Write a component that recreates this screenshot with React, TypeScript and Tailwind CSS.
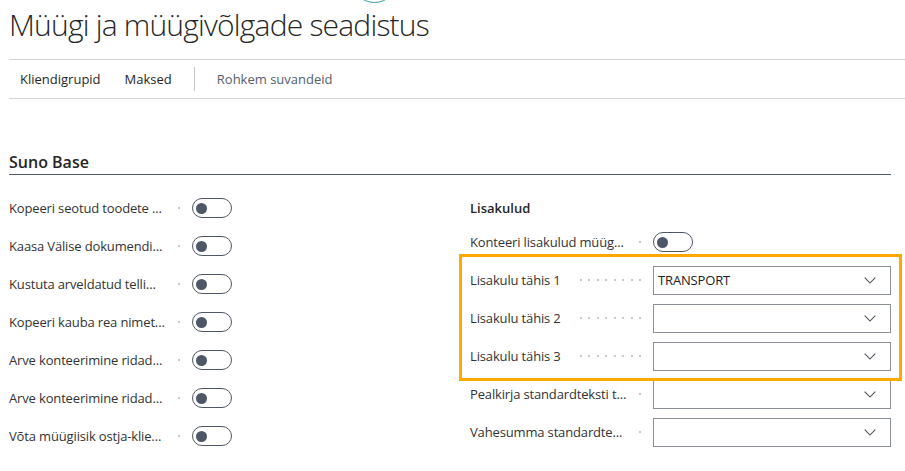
import React from "react";

const FONT = { fontFamily: "'Open Sans', 'Noto Sans', 'Liberation Sans', sans-serif" };

function Dots({ count }: { count: number }) {
  return (
    <div className="flex min-w-0 flex-1 items-center justify-end gap-[6.5px] overflow-hidden pl-[8px] pr-[12px]">
      {Array.from({ length: count }).map((_, i) => (
        <span key={i} className="h-[2px] w-[2px] shrink-0 bg-[#c9c9c9]" />
      ))}
    </div>
  );
}

function Label({ text, dots = 1 }: { text: string; dots?: number }) {
  return (
    <div className="flex w-[183px] shrink-0 items-center">
      <span className="shrink-0 whitespace-nowrap text-[13px] leading-[20px] tracking-[-0.15px] text-[#333333]">
        {text}
      </span>
      <Dots count={dots} />
    </div>
  );
}

function Toggle() {
  return (
    <div className="flex h-[20px] w-[40px] items-center rounded-full border border-[#4e5665] pl-[3px]">
      <span className="h-[11px] w-[11px] rounded-full bg-[#4e5768]" />
    </div>
  );
}

function ToggleRow({ label }: { label: string }) {
  return (
    <div className="flex h-[38px] items-center">
      <Label text={label} />
      <Toggle />
    </div>
  );
}

function Chevron() {
  return (
    <svg width="12" height="7" viewBox="0 0 12 7" fill="none">
      <polyline points="0.7,0.7 6,6 11.3,0.7" stroke="#4a4f57" strokeWidth="1.05" />
    </svg>
  );
}

function SelectRow({ label, value, dots = 1 }: { label: string; value?: string; dots?: number }) {
  return (
    <div className="flex h-[38px] items-center">
      <Label text={label} dots={dots} />
      <div className="flex h-[29px] w-[238px] items-center justify-between border border-[#8a8f98] pl-[4px] pr-[14px]">
        <span className="text-[13px] leading-[20px] tracking-[-0.15px] text-[#212121]">{value ?? ""}</span>
        <Chevron />
      </div>
    </div>
  );
}

export default function App() {
  const left = [
    "Kopeeri seotud toodete ...",
    "Kaasa Välise dokumendi...",
    "Kustuta arveldatud telli...",
    "Kopeeri kauba rea nimet...",
    "Arve konteerimine ridad...",
    "Arve konteerimine ridad...",
    "Võta müügiisik ostja-klie...",
  ];
  return (
    <div className="relative h-[471px] w-[905px] overflow-hidden bg-white" style={FONT}>
      <div className="pointer-events-none absolute left-[351px] top-[-44px] h-[47px] w-[47px] rounded-full border-[1.5px] border-[#3a9a9a]" />

      <div className="ml-[9px]">
        <div className="h-[60px] border-b border-[#d4d4d4] pt-[5px]">
          <h1 className="whitespace-nowrap text-[30px] font-light leading-[40px] tracking-[-0.8px] text-[#262626]">
            Müügi ja müügivõlgade seadistus
          </h1>
        </div>
        <div className="flex h-[39px] items-center border-b border-[#d4d4d4] text-[13px] leading-[20px]">
          <span className="ml-[11px] text-[#262626]">Kliendigrupid</span>
          <span className="ml-[24px] text-[#262626]">Maksed</span>
          <span className="ml-[22px] h-[24px] w-px bg-[#c4c4c4]" />
          <span className="ml-[22px] text-[#55606e]">Rohkem suvandeid</span>
        </div>

        <div className="mt-[40px] flex h-[36px] w-[882px] items-end border-b border-[#4f5968] pb-[1px]">
          <span className="text-[16px] font-semibold leading-[22px] text-[#262626]">Suno Base</span>
        </div>

        <div className="mt-[14px] grid w-[882px] grid-cols-[421px_421px] gap-x-[40px]">
          <div className="flex flex-col">
            {left.map((l, i) => (
              <ToggleRow key={i} label={l} />
            ))}
          </div>
          <div className="flex flex-col">
            <div className="flex h-[34px] items-end pb-[5px]">
              <span className="text-[13px] font-semibold leading-[20px] text-[#262626]">Lisakulud</span>
            </div>
            <ToggleRow label="Konteeri lisakulud müüg..." />
            <div className="relative">
              <SelectRow label="Lisakulu tähis 1" value="TRANSPORT" dots={8} />
              <SelectRow label="Lisakulu tähis 2" dots={8} />
              <SelectRow label="Lisakulu tähis 3" dots={8} />
              <div className="pointer-events-none absolute -bottom-[6px] -left-[11px] -right-[11px] -top-[7px] border-[3px] border-[#ffa800]" />
            </div>
            <SelectRow label="Pealkirja standardteksti t..." />
            <SelectRow label="Vahesumma standardte..." />
          </div>
        </div>
      </div>
    </div>
  );
}
